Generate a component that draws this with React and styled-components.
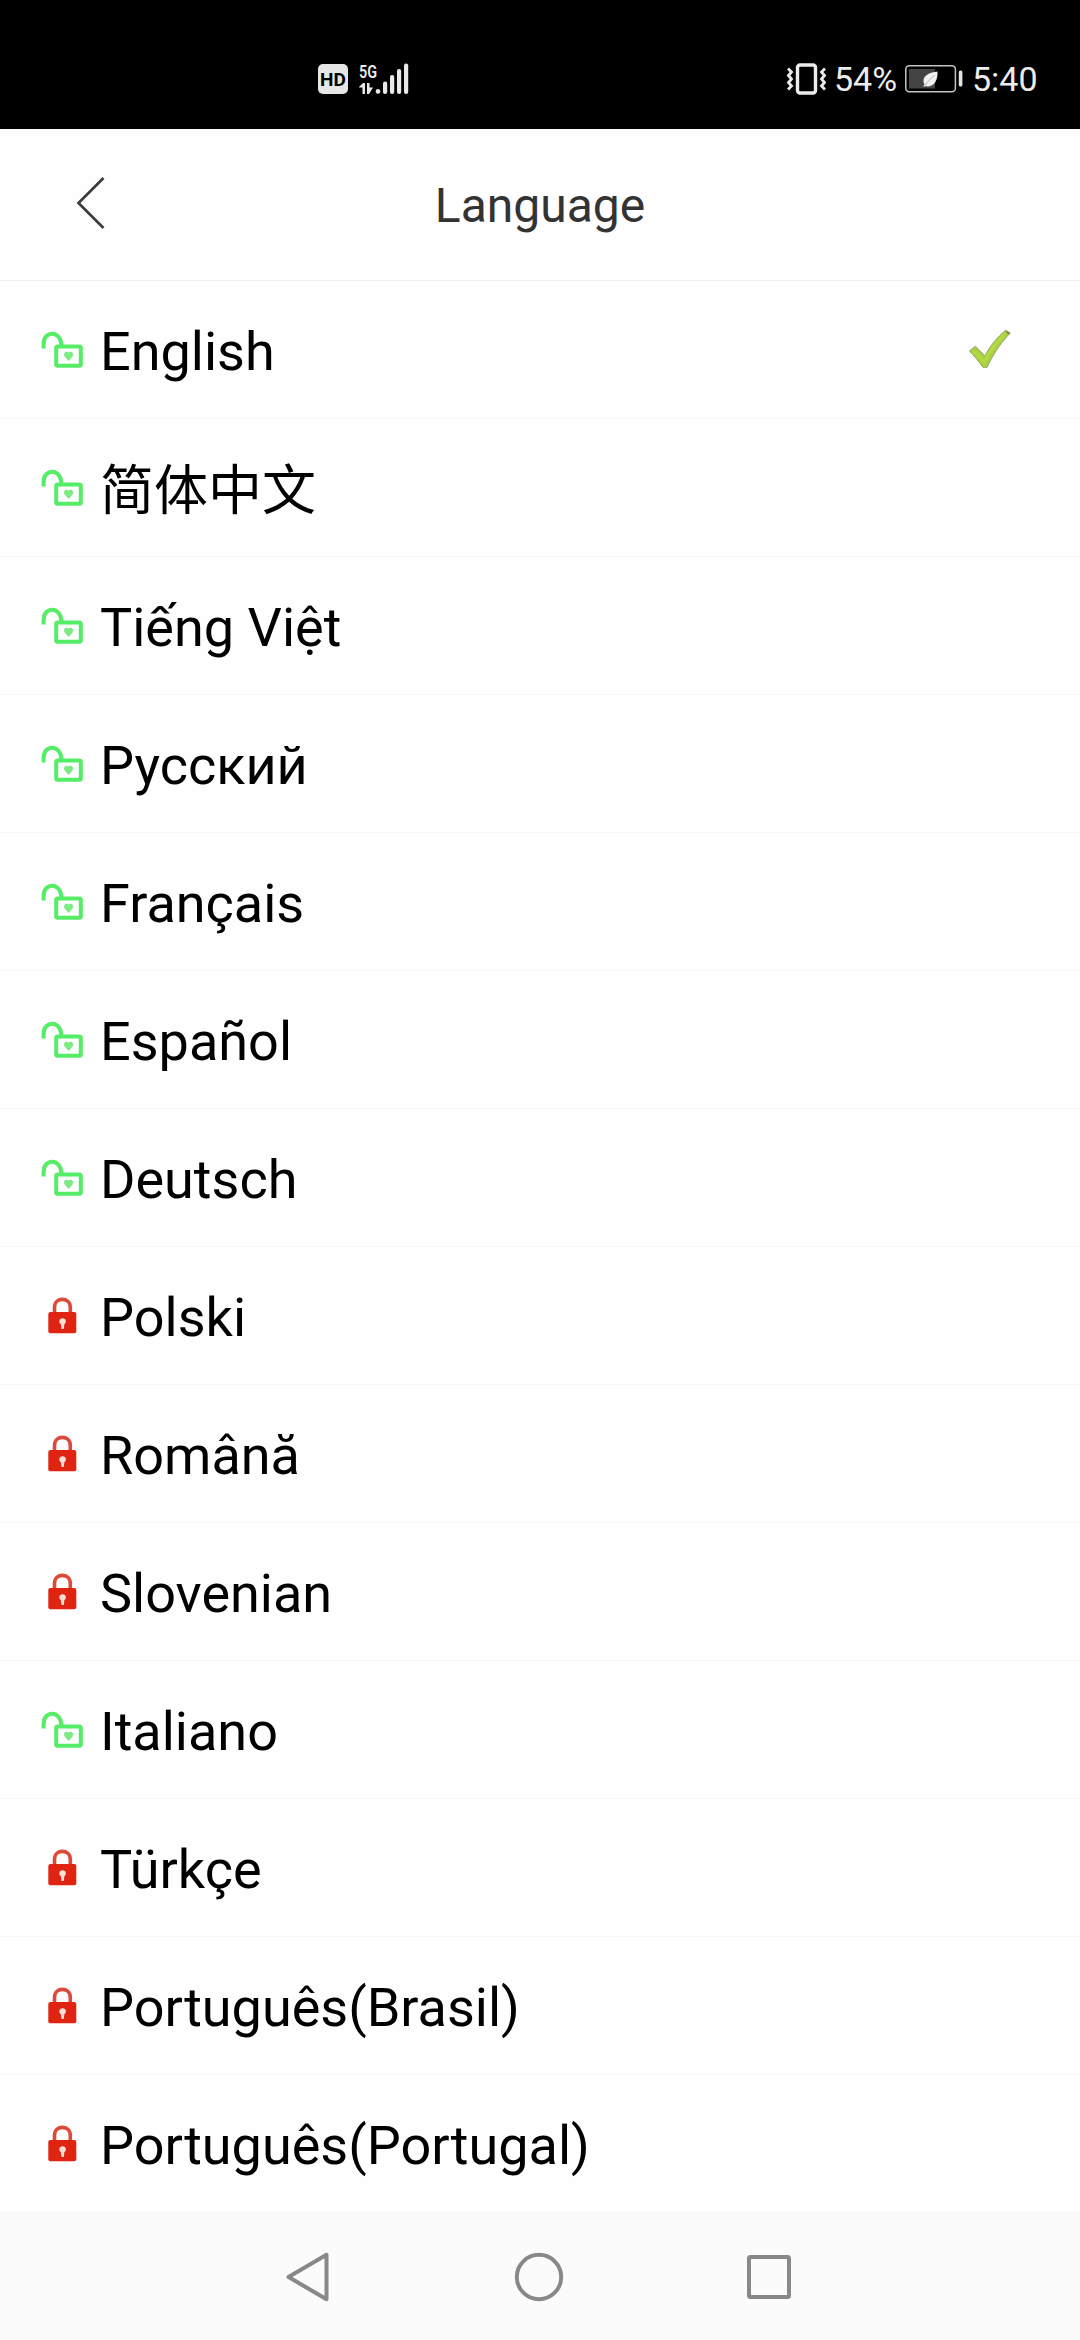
// src/App.jsx
import { useState } from 'react';
import styled, { createGlobalStyle } from 'styled-components';

const languages = [
  { name: 'English', unlocked: true },
  { name: '简体中文', unlocked: true, lang: 'zh' },
  { name: 'Tiếng Việt', unlocked: true },
  { name: 'Русский', unlocked: true },
  { name: 'Français', unlocked: true },
  { name: 'Español', unlocked: true },
  { name: 'Deutsch', unlocked: true },
  { name: 'Polski', unlocked: false },
  { name: 'Română', unlocked: false },
  { name: 'Slovenian', unlocked: false },
  { name: 'Italiano', unlocked: true },
  { name: 'Türkçe', unlocked: false },
  { name: 'Português(Brasil)', unlocked: false },
  { name: 'Português(Portugal)', unlocked: false },
];

const SignalIcon = () => (
  <svg width="52" height="42" viewBox="0 -4 52 42" fill="#e9e9e9">
    <text
      x="1"
      y="15.5"
      fontSize="18.5"
      fontWeight="600"
      textLength="18"
      lengthAdjust="spacingAndGlyphs"
    >
      5G
    </text>
    <path d="M1 25 L5 21 H7 V32 H4.5 V25.5 H1z" />
    <path d="M9 21 H11.5 V25.5 H15 L11 32 H9z" />
    <circle cx="20" cy="29.4" r="2.3" />
    <rect x="25" y="19.5" width="4.2" height="12.5" rx="2" />
    <rect x="32" y="13" width="4.2" height="19" rx="2" />
    <rect x="39" y="7" width="4.2" height="25" rx="2" />
    <rect x="46" y="1.5" width="4.2" height="30.5" rx="2" />
  </svg>
);

const VibrateIcon = () => (
  <svg width="42" height="34" viewBox="0 0 42 34" fill="none" stroke="#ececec">
    <rect x="11.5" y="3" width="18" height="28" rx="2.5" strokeWidth="3.4" />
    <path d="M2 6.5 L5.5 10 L2.5 13.5 L5.5 17 L2.5 20.5 L5.5 24 L2 27.5" strokeWidth="2.8" />
    <path d="M39 6.5 L35.5 10 L38.5 13.5 L35.5 17 L38.5 20.5 L35.5 24 L39 27.5" strokeWidth="2.8" />
  </svg>
);

const BatteryIcon = () => (
  <svg width="58" height="28" viewBox="0 0 58 28" fill="none">
    <rect x="0.8" y="0.8" width="49.6" height="26" rx="3.5" stroke="#c4c4c4" strokeWidth="1.5" />
    <rect x="4" y="4" width="26" height="19.5" fill="#444" />
    <path d="M32.5 6.5 C25 7.5 19 10 18.5 15 C18.3 17 19 18.5 19.5 19.5 L18 21.5 L21 21.3 C27 22.2 33 18 32.5 6.5z" fill="#f0f0f0" />
    <path d="M20 20.5 C23 16 26 13 29.5 10.5" stroke="#aaa" strokeWidth="0.8" />
    <rect x="53.8" y="5.5" width="3.6" height="16" rx="1.5" fill="#e4e4e4" />
  </svg>
);

const BackIcon = () => (
  <svg width="30" height="54" viewBox="0 0 30 54" fill="none">
    <path d="M27.5 2 L2.5 27 L27.5 52" stroke="#3c3c3c" strokeWidth="2.7" />
  </svg>
);

const UnlockedIcon = () => (
  <svg width="42" height="38" viewBox="0 0 42 38" fill="none">
    <g stroke="#55ec66" strokeWidth="4">
      <path d="M2.6 17.5 V13 C2.6 -1 20 -1 20.4 14.5" />
      <rect x="15.2" y="15.4" width="24.6" height="19.4" rx="1.5" />
    </g>
    <path d="M27.6 30 L23.6 25.6 C21.6 21.8 25.6 19.4 27.6 21.6 C29.6 19.4 33.6 21.8 31.6 25.6z" fill="#7dea86" />
  </svg>
);

const LockedIcon = () => (
  <svg width="42" height="38" viewBox="0 0 42 38" fill="none">
    <path d="M13.5 18 V10.5 C13.5 -0.3 29.3 -0.3 29.3 10.5 V18" stroke="#dc4a3c" strokeWidth="3.6" />
    <rect x="7.3" y="15" width="28" height="21.3" rx="2" fill="#e02412" />
    <path d="M21.6 21.3 C25.6 21.3 25.6 26 23.4 27 L22.8 32 H20.6 L19.8 27 C17.6 26 17.6 21.3 21.6 21.3z" fill="#fbe0d8" />
  </svg>
);

const CheckIcon = () => (
  <svg width="44" height="42" viewBox="0 0 44 42">
    <path
      d="M1.3 22 L7.5 17.2 L16.8 27 C21.5 17.5 29 8.5 37.5 1.2 L42.3 4 C32 14.5 24.5 26.5 19.2 38.3 H14.8 C10.5 32 6 26.5 1.3 22z"
      fill="#a9cf45"
      stroke="#98ab65"
      strokeWidth="1"
    />
    <path d="M5.5 22.3 L16.3 33 C22 21 29 12.5 36.5 5.5" fill="none" stroke="#b2dc42" strokeWidth="3" />
    <path d="M37.5 1.5 L41.8 4 L40 5.6z" fill="#6f7d50" />
  </svg>
);

const App = () => {
  const [selected, setSelected] = useState('English');

  return (
    <Screen>
      <GlobalStyle />
      <StatusBar>
        <StatusGroup $gap={10}>
          <HdBadge>HD</HdBadge>
          <SignalIcon />
        </StatusGroup>
        <StatusGroup $gap={6}>
          <VibrateIcon />
          <StatusText $width={65}>54%</StatusText>
          <BatteryIcon />
          <Clock $width={68}>5:40</Clock>
        </StatusGroup>
      </StatusBar>

      <Header>
        <BackButton aria-label="Back">
          <BackIcon />
        </BackButton>
        <Title>Language</Title>
      </Header>

      <LanguageList>
        {languages.map(({ name, unlocked, lang }) => (
          <LanguageRow key={name} onClick={() => setSelected(name)}>
            {unlocked ? <UnlockedIcon /> : <LockedIcon />}
            <LanguageName $cjk={lang === 'zh'}>{name}</LanguageName>
            {selected === name && <CheckIcon />}
          </LanguageRow>
        ))}
      </LanguageList>

      <NavBar>
        <svg width="50" height="54" viewBox="0 0 50 54">
          <path d="M4.5 27 L42.5 4.8 V49.2z" />
        </svg>
        <svg width="50" height="54" viewBox="0 0 50 54">
          <circle cx="25" cy="27" r="22.2" />
        </svg>
        <svg width="50" height="54" viewBox="0 0 50 54">
          <rect x="5" y="7" width="40" height="40" rx="1.5" />
        </svg>
      </NavBar>
    </Screen>
  );
};

// Styles
const GlobalStyle = createGlobalStyle`
  * {
    box-sizing: border-box;
  }

  body {
    margin: 0;
    background: #fefefe;
    font-family: Roboto, 'Noto Sans CJK SC', sans-serif;
  }

  svg {
    display: block;
    flex-shrink: 0;
    overflow: visible;
  }
`;

const Screen = styled.div`
  display: flex;
  flex-direction: column;
  width: 1080px;
  height: 2340px;
  overflow: hidden;
`;

const StatusBar = styled.div`
  display: flex;
  justify-content: space-between;
  height: 129px;
  padding: 59px 40px 30px 318px;
  background: #000;
`;

const StatusGroup = styled.div`
  display: flex;
  align-items: center;
  gap: ${({ $gap }) => $gap}px;
  height: 40px;
`;

const HdBadge = styled.span`
  width: 30px;
  height: 30px;
  border-radius: 5px;
  background: #e6e6e6;
  color: #000;
  font-size: 19px;
  font-weight: 700;
  line-height: 31px;
  text-align: center;
`;

const StatusText = styled.span`
  width: ${({ $width }) => $width}px;
  color: #ececec;
  font-size: 34px;
  line-height: 40px;
  white-space: nowrap;
`;

const Clock = styled(StatusText)`
  margin-left: 3px;
`;

const Header = styled.header`
  display: grid;
  grid-template-columns: 180px 1fr 180px;
  align-items: center;
  height: 152px;
  border-bottom: 1px solid #f2f2f2;
`;

const BackButton = styled.button`
  padding: 0 0 4px 76px;
  border: none;
  background: none;
  cursor: pointer;
`;

const Title = styled.h1`
  margin: 0;
  padding-top: 2px;
  color: #333;
  font-size: 48px;
  font-weight: 400;
  line-height: 60px;
  text-align: center;
`;

const LanguageList = styled.ul`
  margin: 0;
  padding: 0;
  list-style: none;
`;

const LanguageRow = styled.li`
  display: flex;
  align-items: center;
  height: 138px;
  padding: 0 68px 0 41px;
  border-bottom: 1px solid #f7f7f7;
  cursor: pointer;
`;

const LanguageName = styled.span`
  flex: 1;
  /* CJK glyphs sit higher on the line than the latin ones */
  padding: ${({ $cjk }) => ($cjk ? 8 : 5)}px 0 0 17px;
  color: #000;
  font-size: 54px;
  line-height: 64px;
`;

const NavBar = styled.nav`
  display: flex;
  flex: 1;
  justify-content: space-between;
  align-items: center;
  padding: 0 286px 0 284px;
  background: #fbfbfb;

  svg {
    fill: none;
    stroke: #888;
    stroke-width: 4;
    stroke-linejoin: round;
  }
`;

export default App;
